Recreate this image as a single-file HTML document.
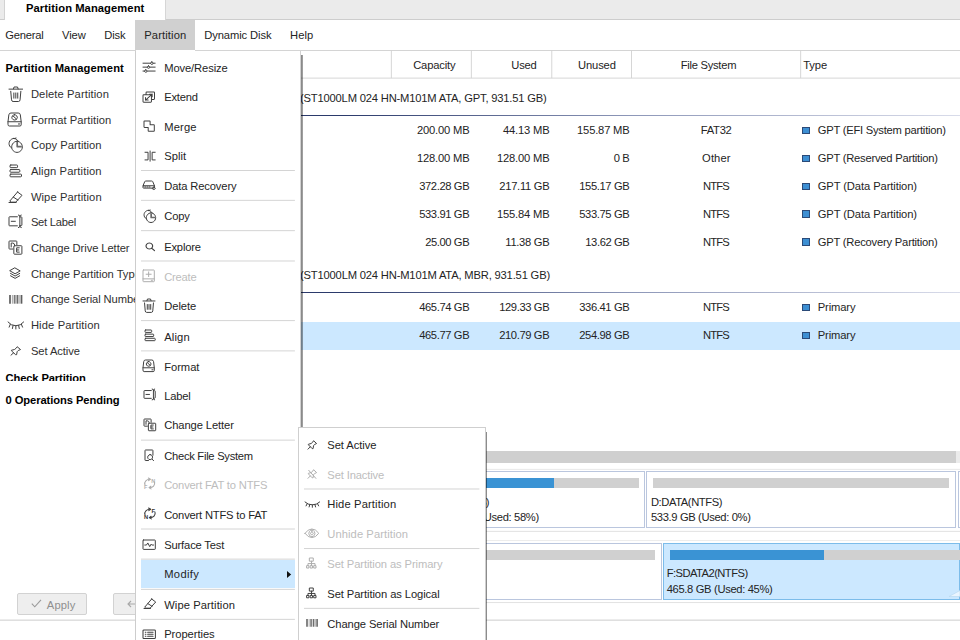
<!DOCTYPE html>
<html lang="en">
<head>
<meta charset="utf-8">
<title>Partition Management</title>
<style>
*{box-sizing:border-box;margin:0;padding:0}
html,body{width:960px;height:640px;overflow:hidden;background:#fff}
body{position:relative;font-family:"Liberation Sans",sans-serif;font-size:11.2px;color:#242424;line-height:14px}
.abs{position:absolute}
.grp{position:absolute;left:0;top:0;width:960px;height:640px}
.t{position:absolute;white-space:nowrap;height:14px;line-height:14px}
.b{font-weight:bold;color:#000}
.dis{color:#bdbdbd}
.lp{color:#303030}
svg{position:absolute;overflow:visible}
.ic{fill:none;stroke:#404040;stroke-width:1;vector-effect:non-scaling-stroke;stroke-linecap:round;stroke-linejoin:round}
.icd{fill:none;stroke:#adadad;stroke-width:1;vector-effect:non-scaling-stroke;stroke-linecap:round;stroke-linejoin:round}
/* ---------- top ---------- */
#tabbar{left:0;top:0;width:960px;height:19.6px;background:#ebebeb;border-bottom:1px solid #cdcdcd}
#tab{left:3.6px;top:0;width:162px;height:20px;background:#fff;border-left:1px solid #d2d2d2;border-right:1px solid #d6d6d6}
#menubar{left:0;top:20px;width:960px;height:31px;background:#fff;border-bottom:1px solid #d4d4d4}
#msel{left:135px;top:20px;width:60px;height:30px;background:#d0d0d0}
/* ---------- table ---------- */
.hl{position:absolute;height:1px}
.sq{position:absolute;width:8px;height:7.6px;background:#3d8fd3;border:1px solid #2b4a78}
.btn{background:#eeeeee;border:1px solid #d2d2d2;border-radius:2px}
.dline{background:linear-gradient(90deg,#2b3a6b 0,#2b3a6b 25%,#8d97b8 60%,#d9dcea 100%)}
.dots{background:#cfcfcf}
.box{background:#fff;border:1px solid #bac6de}
.boxs{background:#cce8ff;border:1px solid #7cbcea}
.bar{background:#d0d0d0}
.barb{background:#3a93d4}
/* ---------- menus ---------- */
.menu{position:absolute;background:#fff}
</style>
</head>
<body>
<!-- top -->
<header class="grp">
<div class="abs" id="tabbar"></div>
<div class="abs" id="tab"></div>
<div class="abs" id="menubar"></div>
<div class="abs" id="msel"></div>
<div class="t b" style="left:26px;top:1px;letter-spacing:0.074px">Partition Management</div>
<div class="t" style="left:5.2px;top:28px;letter-spacing:-0.225px">General</div>
<div class="t" style="left:62px;top:28px;letter-spacing:-0.085px">View</div>
<div class="t" style="left:104.3px;top:28px;letter-spacing:-0.191px">Disk</div>
<div class="t" style="left:144.3px;top:28px;letter-spacing:0.106px">Partition</div>
<div class="t" style="left:204.3px;top:28px;letter-spacing:-0.106px">Dynamic Disk</div>
<div class="t" style="left:290px;top:28px;letter-spacing:0.053px">Help</div>
</header>
<!-- left -->
<aside class="grp" aria-label="Partition Management actions">
<div class="t b" style="left:5.5px;top:61px;letter-spacing:0.074px">Partition Management</div>
<div class="abs" style="left:0;top:51px;width:135px;height:330px;overflow:hidden">
<svg style="left:8.5px;top:35.5px" width="13.6" height="14.5" viewBox="1.00 2.40 14.00 12.20" preserveAspectRatio="none"><path class="ic" d="M1 4.2H15 M5.6 4L6.2 2.4H9.8L10.4 4"/><path class="ic" d="M2.8 6L3.6 13.2Q3.8 14.6 5.2 14.6H10.8Q12.2 14.6 12.4 13.2L13.2 6"/><path class="ic" d="M6 7.4V11.8 M8 7.4V11.8 M10 7.4V11.8"/></svg>
<div class="t lp" style="left:30.9px;top:36px;letter-spacing:0.100px">Delete Partition</div>
<svg style="left:8.0px;top:61.5px" width="13.2" height="13.0" viewBox="1.80 1.80 12.40 12.80" preserveAspectRatio="none"><path class="ic" d="M1.8 10.4L2.6 3.6Q2.8 1.8 4.6 1.8H11.4Q13.2 1.8 13.4 3.6L14.2 10.4V13.4Q14.2 14.6 13 14.6H3Q1.8 14.6 1.8 13.4Z M1.8 10.4H14.2"/><path class="ic" d="M8 3.5A2.6 2.6 0 1 0 8.01 3.5Z M6.4 4.6L9.6 7.6"/><path class="ic" d="M11.6 12.6H12.8"/></svg>
<div class="t lp" style="left:30.9px;top:62px;letter-spacing:0.045px">Format Partition</div>
<svg style="left:8.7px;top:86.9px" width="13.4" height="14.4" viewBox="0.00 -0.40 14.20 14.70" preserveAspectRatio="none"><path class="ic" d="M5.2 0A5.2 5.2 0 1 0 5.21 0Z M6 0.2L7.4 -0.4"/><path class="ic" d="M8.5 2.9A5.7 5.7 0 1 0 8.51 2.9Z" style="fill:var(--icbg,#fff)"/><path class="ic" d="M8.7 3.6V8.4H13.6" style="stroke-width:1.7;stroke-linecap:butt;stroke:#6a6a6a"/></svg>
<div class="t lp" style="left:30.9px;top:87px;letter-spacing:0.030px">Copy Partition</div>
<svg style="left:9.7px;top:113.7px" width="11.5" height="11.8" viewBox="2.00 1.80 12.20 12.40" preserveAspectRatio="none"><path class="ic" d="M2.8 1.8H9.2Q10 1.8 10 2.6V3.8Q10 4.6 9.2 4.6H2.8Q2 4.6 2 3.8V2.6Q2 1.8 2.8 1.8Z"/><path class="ic" d="M2.8 6.6H11.6Q12.4 6.6 12.4 7.4V8.6Q12.4 9.4 11.6 9.4H2.8Q2 9.4 2 8.6V7.4Q2 6.6 2.8 6.6Z"/><path class="ic" d="M2.8 11.4H13.4Q14.2 11.4 14.2 12.2V13.4Q14.2 14.2 13.4 14.2H2.8Q2 14.2 2 13.4V12.2Q2 11.4 2.8 11.4Z"/></svg>
<div class="t lp" style="left:30.9px;top:113px;letter-spacing:0.117px">Align Partition</div>
<svg style="left:8.5px;top:140.5px" width="13.0" height="10.5" viewBox="1.20 1.80 13.40 12.00" preserveAspectRatio="none"><path class="ic" d="M10 1.8L14.6 5.6L8.2 13.4H3.4L2 12.2L10 1.8Z M5.6 7.6L10.4 11 M1.2 13.8H8.6"/></svg>
<div class="t lp" style="left:30.9px;top:139px;letter-spacing:0.085px">Wipe Partition</div>
<svg style="left:9.2px;top:163.9px" width="12.9" height="12.6" viewBox="1.80 1.60 12.60 12.80" preserveAspectRatio="none"><path class="ic" d="M10 3.4H2.4Q1.8 3.4 1.8 4V12Q1.8 12.6 2.4 12.6H10 M4 8H8"/><path class="ic" d="M11 1.6Q12.4 1.6 12.4 3V13Q12.4 14.4 11 14.4 M13.8 1.6Q12.4 1.6 12.4 3 M12.4 13Q12.4 14.4 13.8 14.4 M12.4 3.6H13.8Q14.4 3.6 14.4 4.2V11.8Q14.4 12.4 13.8 12.4H12.4"/></svg>
<div class="t lp" style="left:30.9px;top:164px;letter-spacing:-0.250px">Set Label</div>
<svg style="left:9.2px;top:189.8px" width="12.9" height="13.2" viewBox="1.60 1.60 12.80 12.80" preserveAspectRatio="none"><path class="ic" d="M5.4 9.4H2.2Q1.6 9.4 1.6 8.8V2.2Q1.6 1.6 2.2 1.6H8.8Q9.4 1.6 9.4 2.2V5.2 M3.8 7.4V3.6H5.2Q7 3.6 7.2 5.2"/><path class="ic" d="M7 6.2H13.8Q14.4 6.2 14.4 6.8V13.8Q14.4 14.4 13.8 14.4H7Q6.4 14.4 6.4 13.8V6.8Q6.4 6.2 7 6.2Z"/><path class="ic" d="M11.8 8.2H9.2V12.4H11.8 M9.2 10.3H11.4"/></svg>
<div class="t lp" style="left:30.9px;top:190px;letter-spacing:-0.083px">Change Drive Letter</div>
<svg style="left:10.2px;top:216.5px" width="10.2" height="10.4" viewBox="2.00 1.80 12.00 11.50" preserveAspectRatio="none"><path class="ic" d="M8 1.8L14 5L8 8.2L2 5Z M2.6 7.8L8 10.7L13.4 7.8 M2.6 10.4L8 13.3L13.4 10.4"/></svg>
<div class="t lp" style="left:30.9px;top:216px;letter-spacing:-0.027px">Change Partition Type</div>
<svg style="left:9.7px;top:243.8px" width="11.5" height="8.7" viewBox="2.80 2.50 11.40 11.00" preserveAspectRatio="none"><path d="M2.8 2.5V13.5" fill="none" stroke="#5e5e5e" stroke-width="1.7"/><path d="M5.2 2.5V13.5" fill="none" stroke="#8a8a8a" stroke-width="0.8"/><path d="M7.4 2.5V13.5" fill="none" stroke="#7c7c7c" stroke-width="1.9"/><path d="M10.2 2.5V13.5" fill="none" stroke="#6c6c6c" stroke-width="1.9"/><path d="M12.4 2.5V13.5" fill="none" stroke="#9a9a9a" stroke-width="0.8"/><path d="M14.2 2.5V13.5" fill="none" stroke="#5e5e5e" stroke-width="1.7"/></svg>
<div class="t lp" style="left:30.9px;top:241px;letter-spacing:-0.093px">Change Serial Number</div>
<svg style="left:7.5px;top:270.5px" width="15.7" height="7.0" viewBox="-1.60 5.40 19.20 6.00" preserveAspectRatio="none"><path class="ic" d="M-1.6 5.4Q2 8.6 8 8.6Q14 8.6 17.6 5.4 M1.2 7.4L-0.2 9.8 M4.6 8.4L3.8 11 M8 8.6V11.4 M11.4 8.4L12.2 11 M14.8 7.4L16.2 9.8"/></svg>
<div class="t lp" style="left:30.9px;top:267px;letter-spacing:0.131px">Hide Partition</div>
<svg style="left:10.9px;top:295.6px" width="9.5" height="8.2" viewBox="2.00 2.00 12.00 11.30" preserveAspectRatio="none"><path class="ic" d="M10.2 2L14 5.5L11.1 6.9L9.75 8.5L9.1 12.6H7.85L2.55 7.3V6.5L6.35 5.5L8.25 3.9Z M5.3 10L2 13.3"/></svg>
<div class="t lp" style="left:30.9px;top:293px;letter-spacing:-0.070px">Set Active</div>
<div class="t b" style="left:5.5px;top:320px;letter-spacing:-0.125px">Check Partition</div>
</div>
<div class="t b" style="left:5.5px;top:393px;letter-spacing:-0.083px">0 Operations Pending</div>
<div class="abs btn" style="left:17px;top:593.3px;width:69.7px;height:21.7px"></div>
<svg style="left:31px;top:599px" width="11" height="9" viewBox="0 0 11 9"><path d="M0.8 4.6L3.8 7.8L10 0.8" fill="none" stroke="#9a9a9a" stroke-width="1.1"/></svg>
<div class="t" style="left:46.8px;top:598px;letter-spacing:0.132px;color:#8f8f8f">Apply</div>
<div class="abs btn" style="left:112.5px;top:593.3px;width:69.2px;height:21.7px"></div>
<svg style="left:126.5px;top:599.5px" width="11" height="8" viewBox="0 0 11 8"><path d="M1 4H10.5 M4 1L1 4L4 7" fill="none" stroke="#a8a8a8" stroke-width="1.1"/></svg>
<svg style="left:0;top:0" width="960" height="640" viewBox="0 0 960 640"><rect x="0" y="619.68" width="960" height="0.85" fill="#c4c4c4"/></svg>
</aside>
<!-- table -->
<main class="grp"><section class="grp" aria-label="Partition list">
<svg style="left:0;top:0" width="960" height="640" viewBox="0 0 960 640"><rect x="135" y="77.67" width="825" height="0.85" fill="#cfcfcf"/><rect x="390.88" y="50.6" width="0.85" height="27.5" fill="#cfcfcf"/><rect x="470.88" y="50.6" width="0.85" height="27.5" fill="#cfcfcf"/><rect x="551.38" y="50.6" width="0.85" height="27.5" fill="#cfcfcf"/><rect x="631.08" y="50.6" width="0.85" height="27.5" fill="#cfcfcf"/><rect x="800.28" y="50.6" width="0.85" height="27.5" fill="#cfcfcf"/></svg>
<div class="t" style="left:334.32px;width:200px;text-align:center;top:58px;letter-spacing:-0.163px">Capacity</div>
<div class="t" style="left:423.86px;width:200px;text-align:center;top:58px;letter-spacing:-0.276px">Used</div>
<div class="t" style="left:496.93px;width:200px;text-align:center;top:58px;letter-spacing:-0.136px">Unused</div>
<div class="t" style="left:608.47px;width:200px;text-align:center;top:58px;letter-spacing:-0.268px">File System</div>
<div class="t" style="left:803.2px;top:58px;letter-spacing:-0.107px">Type</div>
<div class="t" style="left:300.0px;top:91px;letter-spacing:-0.184px">(ST1000LM 024 HN-M101M ATA, GPT, 931.51 GB)</div>
<div class="hl dline" style="left:135px;top:115px;width:825px"></div>
<div class="t" style="left:300.0px;top:268px;letter-spacing:-0.178px">(ST1000LM 024 HN-M101M ATA, MBR, 931.51 GB)</div>
<div class="hl dline" style="left:135px;top:292px;width:825px"></div>
<div class="abs" style="left:135px;top:322px;width:825px;height:27.5px;background:#cce8ff"></div>
<div class="t" style="right:490.59px;top:123px;letter-spacing:-0.186px">200.00 MB</div>
<div class="t" style="right:410.59px;top:123px;letter-spacing:-0.191px">44.13 MB</div>
<div class="t" style="right:330.49px;top:123px;letter-spacing:-0.186px">155.87 MB</div>
<div class="t" style="left:616.17px;width:200px;text-align:center;top:123px;letter-spacing:-0.266px">FAT32</div>
<div class="sq" style="left:802.3px;top:126.7px"></div>
<div class="t" style="left:817.7px;top:123px;letter-spacing:-0.232px">GPT (EFI System partition)</div>
<div class="t" style="right:490.59px;top:151px;letter-spacing:-0.186px">128.00 MB</div>
<div class="t" style="right:410.59px;top:151px;letter-spacing:-0.186px">128.00 MB</div>
<div class="t" style="right:330.7px;top:151px;letter-spacing:-0.396px">0 B</div>
<div class="t" style="left:616.35px;width:200px;text-align:center;top:151px;letter-spacing:0.098px">Other</div>
<div class="sq" style="left:802.3px;top:154.7px"></div>
<div class="t" style="left:817.7px;top:151px;letter-spacing:-0.225px">GPT (Reserved Partition)</div>
<div class="t" style="right:490.78px;top:179px;letter-spacing:-0.383px">372.28 GB</div>
<div class="t" style="right:410.69px;top:179px;letter-spacing:-0.291px">217.11 GB</div>
<div class="t" style="right:330.68px;top:179px;letter-spacing:-0.383px">155.17 GB</div>
<div class="t" style="left:615.87px;width:200px;text-align:center;top:179px;letter-spacing:-0.857px">NTFS</div>
<div class="sq" style="left:802.3px;top:182.5px"></div>
<div class="t" style="left:817.7px;top:179px;letter-spacing:-0.092px">GPT (Data Partition)</div>
<div class="t" style="right:490.78px;top:207px;letter-spacing:-0.383px">533.91 GB</div>
<div class="t" style="right:410.59px;top:207px;letter-spacing:-0.186px">155.84 MB</div>
<div class="t" style="right:330.68px;top:207px;letter-spacing:-0.383px">533.75 GB</div>
<div class="t" style="left:615.87px;width:200px;text-align:center;top:207px;letter-spacing:-0.857px">NTFS</div>
<div class="sq" style="left:802.3px;top:210.2px"></div>
<div class="t" style="left:817.7px;top:207px;letter-spacing:-0.092px">GPT (Data Partition)</div>
<div class="t" style="right:490.81px;top:235px;letter-spacing:-0.412px">25.00 GB</div>
<div class="t" style="right:410.71px;top:235px;letter-spacing:-0.307px">11.38 GB</div>
<div class="t" style="right:330.71px;top:235px;letter-spacing:-0.412px">13.62 GB</div>
<div class="t" style="left:615.87px;width:200px;text-align:center;top:235px;letter-spacing:-0.857px">NTFS</div>
<div class="sq" style="left:802.3px;top:238.0px"></div>
<div class="t" style="left:817.7px;top:235px;letter-spacing:-0.201px">GPT (Recovery Partition)</div>
<div class="t" style="right:490.78px;top:300px;letter-spacing:-0.383px">465.74 GB</div>
<div class="t" style="right:410.78px;top:300px;letter-spacing:-0.383px">129.33 GB</div>
<div class="t" style="right:330.68px;top:300px;letter-spacing:-0.383px">336.41 GB</div>
<div class="t" style="left:615.87px;width:200px;text-align:center;top:300px;letter-spacing:-0.857px">NTFS</div>
<div class="sq" style="left:802.3px;top:303.9px"></div>
<div class="t" style="left:817.7px;top:300px;letter-spacing:-0.119px">Primary</div>
<div class="t" style="right:490.78px;top:328px;letter-spacing:-0.383px">465.77 GB</div>
<div class="t" style="right:410.78px;top:328px;letter-spacing:-0.383px">210.79 GB</div>
<div class="t" style="right:330.68px;top:328px;letter-spacing:-0.383px">254.98 GB</div>
<div class="t" style="left:615.87px;width:200px;text-align:center;top:328px;letter-spacing:-0.857px">NTFS</div>
<div class="sq" style="left:802.3px;top:331.7px"></div>
<div class="t" style="left:817.7px;top:328px;letter-spacing:-0.119px">Primary</div>
</section>
<!-- diskmap -->
<section class="grp" aria-label="Disk map">
<div class="abs dots" style="left:300px;top:450.8px;width:656px;height:12.3px"></div>
<div class="abs" style="left:956px;top:450.8px;width:4px;height:12.3px;background:#ebebeb"></div>
<svg style="left:0;top:0" width="960" height="640" viewBox="0 0 960 640"><rect x="300" y="468.88" width="660" height="0.85" fill="#e4e4e4"/><rect x="300" y="530.88" width="660" height="0.85" fill="#dcdcdc"/><rect x="300" y="540.18" width="660" height="0.85" fill="#e9e9e9"/><rect x="300" y="602.18" width="660" height="0.85" fill="#dedede"/></svg>
<div class="abs box" style="left:300px;top:471.2px;width:345.2px;height:56.8px"></div>
<div class="abs bar" style="left:310px;top:478.2px;width:328.8px;height:10.1px"></div>
<div class="abs barb" style="left:310px;top:478.2px;width:244px;height:10.1px"></div>
<div class="t" style="right:471.13px;top:495px;letter-spacing:-0.732px">C:(NTFS)</div>
<div class="t" style="right:421.14px;top:510px;letter-spacing:-0.340px">372.3 GB (Used: 58%)</div>
<div class="abs box" style="left:646.4px;top:471.2px;width:309.6px;height:56.8px"></div>
<div class="abs bar" style="left:652.8px;top:478.2px;width:296.4px;height:10.1px"></div>
<div class="t" style="left:650.9px;top:495px;letter-spacing:-0.399px">D:DATA(NTFS)</div>
<div class="t" style="left:650.9px;top:510px;letter-spacing:-0.350px">533.9 GB (Used: 0%)</div>
<div class="abs box" style="left:957.8px;top:471.2px;width:10px;height:56.8px"></div>
<div class="abs box" style="left:300px;top:543.2px;width:361.6px;height:56.4px"></div>
<div class="abs bar" style="left:310px;top:549.9px;width:345px;height:10px"></div>
<div class="abs boxs" style="left:662.8px;top:543.2px;width:297px;height:56.4px"></div>
<div class="abs bar" style="left:669.8px;top:549.9px;width:295px;height:10px"></div>
<div class="abs barb" style="left:669.8px;top:549.9px;width:154px;height:10px"></div>
<div class="t" style="left:666.7px;top:566px;letter-spacing:-0.542px">F:SDATA2(NTFS)</div>
<div class="t" style="left:666.7px;top:582px;letter-spacing:-0.340px">465.8 GB (Used: 45%)</div>
<svg style="left:949px;top:590px" width="11" height="7" viewBox="0 0 11 7"><path d="M0 6.5L11 0.5V6.5Z" fill="#eaf5ff" stroke="#b7d6ee" stroke-width="0.6"/></svg>
</section></main>
<!-- menu1 -->
<div class="grp" role="menu" aria-label="Partition">
<div class="abs" style="left:300.3px;top:54.7px;width:2.5px;height:373px;background:linear-gradient(90deg,rgba(0,0,0,.46) 0,rgba(0,0,0,.46) 70%,rgba(0,0,0,.28) 100%)"></div>
<div class="menu" style="left:135.2px;top:50.8px;width:165.6px;height:590px;border-left:1px solid #cdcdcd;border-right:1px solid #d2d2d2"></div>
<div class="abs" style="left:136px;top:50px;width:59px;height:1px;background:#fff"></div>
<svg style="left:0;top:0" width="960" height="640" viewBox="0 0 960 640"><rect x="141" y="170.07" width="153.9" height="0.85" fill="#cdcdcd"/><rect x="141" y="199.87" width="153.9" height="0.85" fill="#cdcdcd"/><rect x="141" y="230.27" width="153.9" height="0.85" fill="#cdcdcd"/><rect x="141" y="260.57" width="153.9" height="0.85" fill="#cdcdcd"/><rect x="141" y="320.23" width="153.9" height="0.85" fill="#cdcdcd"/><rect x="141" y="350.48" width="153.9" height="0.85" fill="#cdcdcd"/><rect x="141" y="439.68" width="153.9" height="0.85" fill="#cdcdcd"/><rect x="141" y="528.58" width="153.9" height="0.85" fill="#cdcdcd"/><rect x="141" y="558.68" width="153.9" height="0.85" fill="#cdcdcd"/><rect x="141" y="588.88" width="153.9" height="0.85" fill="#cdcdcd"/><rect x="141" y="618.88" width="153.9" height="0.85" fill="#cdcdcd"/></svg>
<div class="abs" style="left:141px;top:560.2px;width:154px;height:28px;background:#cce8ff"></div>
<svg style="left:287px;top:570.6px" width="4.2" height="7" viewBox="0 0 4.2 7"><path d="M0 0L4.2 3.5L0 7Z" fill="#111"/></svg>
<svg style="left:143.25px;top:61.75px" width="12.15" height="10.25" viewBox="1.40 2.00 13.20 12.00" preserveAspectRatio="none"><path class="ic" d="M1.4 3.4H9.6 M12.4 3.4H14.6 M1.4 8H6 M8.8 8H14.6 M1.4 12.6H3 M5.8 12.6H14.6"/><path class="ic" d="M11 2A1.4 1.4 0 1 0 11.01 2Z M7.4 6.6A1.4 1.4 0 1 0 7.41 6.6Z M4.4 11.2A1.4 1.4 0 1 0 4.41 11.2Z"/></svg>
<div class="t" style="left:164.2px;top:61px;letter-spacing:-0.108px">Move/Resize</div>
<svg style="left:142.9px;top:91.75px" width="11.5" height="10.25" viewBox="1.60 2.00 12.80 12.40" preserveAspectRatio="none"><path class="ic" d="M5 5V2.8Q5 2 5.8 2H13.6Q14.4 2 14.4 2.8V10.2Q14.4 11 13.6 11H11.4"/><path class="ic" d="M2.4 5.4H10.2Q11 5.4 11 6.2V13.6Q11 14.4 10.2 14.4H2.4Q1.6 14.4 1.6 13.6V6.2Q1.6 5.4 2.4 5.4Z"/><path class="ic" d="M4.4 11.8L11.8 4.6 M8.8 4.6H11.8V7.6 M7.4 11.8H4.4V8.8"/></svg>
<div class="t" style="left:164.2px;top:90px;letter-spacing:-0.216px">Extend</div>
<svg style="left:144.1px;top:120.9px" width="10.3" height="10.2" viewBox="2.00 2.20 11.80 11.80" preserveAspectRatio="none"><path class="ic" d="M2.6 2.2H8.4Q9 2.2 9 2.8V6.6H13.2Q13.8 6.6 13.8 7.2V13.4Q13.8 14 13.2 14H7.4Q6.8 14 6.8 13.4V9.6H2.6Q2 9.6 2 9V2.8Q2 2.2 2.6 2.2Z"/></svg>
<div class="t" style="left:164.2px;top:120px;letter-spacing:0.141px">Merge</div>
<svg style="left:144.5px;top:150.7px" width="10.2" height="10.2" viewBox="2.00 1.60 12.00 12.80" preserveAspectRatio="none"><path class="ic" d="M8 1.6V14.4 M2 3.2H5.6V12.8H2 M14 3.2H10.4V12.8H14"/></svg>
<div class="t" style="left:164.2px;top:149px;letter-spacing:0.020px">Split</div>
<svg style="left:142.9px;top:180.8px" width="12.3" height="8.5" viewBox="1.60 2.60 13.70 12.20" preserveAspectRatio="none"><path class="ic" d="M1.6 9.4L3.6 3.4Q3.9 2.6 4.8 2.6H11.2Q12.1 2.6 12.4 3.4L14.4 9.4"/><path class="ic" d="M2.2 9.4H13.8Q14.4 9.4 14.4 10V12.2Q14.4 12.8 13.8 12.8H2.2Q1.6 12.8 1.6 12.2V10Q1.6 9.4 2.2 9.4Z M3.6 11.1H4.6 M6 11.1H7 M8.4 11.1H9.4"/><path class="ic" d="M13.6 11.4A1.7 1.7 0 1 0 13.61 11.4Z"/></svg>
<div class="t" style="left:164.2px;top:179px;letter-spacing:-0.131px">Data Recovery</div>
<svg style="left:143.5px;top:209.6px" width="11.7" height="12.5" viewBox="0.00 -0.40 14.20 14.70" preserveAspectRatio="none"><path class="ic" d="M5.2 0A5.2 5.2 0 1 0 5.21 0Z M6 0.2L7.4 -0.4"/><path class="ic" d="M8.5 2.9A5.7 5.7 0 1 0 8.51 2.9Z" style="fill:var(--icbg,#fff)"/><path class="ic" d="M8.7 3.6V8.4H13.6" style="stroke-width:1.7;stroke-linecap:butt;stroke:#6a6a6a"/></svg>
<div class="t" style="left:164.2px;top:209px;letter-spacing:-0.126px">Copy</div>
<svg style="left:145.7px;top:243.2px" width="8.5" height="7.7" viewBox="2.60 2.60 11.20 11.20" preserveAspectRatio="none"><path class="ic" d="M7 2.6A4.4 4.4 0 1 0 7.01 2.6Z M10.2 10.2L13.8 13.8" style="stroke-width:1.15"/></svg>
<div class="t" style="left:164.2px;top:240px;letter-spacing:-0.189px">Explore</div>
<svg style="left:142.9px;top:269.5px" width="11.3" height="11.7" viewBox="2.40 1.80 11.20 12.40" preserveAspectRatio="none"><path class="icd" d="M3 1.8H13Q13.6 1.8 13.6 2.4V13.6Q13.6 14.2 13 14.2H3Q2.4 14.2 2.4 13.6V2.4Q2.4 1.8 3 1.8Z M2.4 11.2H13.6 M8 3.8V8.8 M5.5 6.3H10.5 M10.6 12.7H11.8"/></svg>
<div class="t dis" style="left:164.2px;top:270px;letter-spacing:-0.230px">Create</div>
<svg style="left:143.2px;top:298.7px" width="12.0" height="13.4" viewBox="1.00 2.40 14.00 12.20" preserveAspectRatio="none"><path class="ic" d="M1 4.2H15 M5.6 4L6.2 2.4H9.8L10.4 4"/><path class="ic" d="M2.8 6L3.6 13.2Q3.8 14.6 5.2 14.6H10.8Q12.2 14.6 12.4 13.2L13.2 6"/><path class="ic" d="M6 7.4V11.8 M8 7.4V11.8 M10 7.4V11.8"/></svg>
<div class="t" style="left:164.2px;top:299px;letter-spacing:-0.040px">Delete</div>
<svg style="left:144.5px;top:330.2px" width="10.2" height="10.7" viewBox="2.00 1.80 12.20 12.40" preserveAspectRatio="none"><path class="ic" d="M2.8 1.8H9.2Q10 1.8 10 2.6V3.8Q10 4.6 9.2 4.6H2.8Q2 4.6 2 3.8V2.6Q2 1.8 2.8 1.8Z"/><path class="ic" d="M2.8 6.6H11.6Q12.4 6.6 12.4 7.4V8.6Q12.4 9.4 11.6 9.4H2.8Q2 9.4 2 8.6V7.4Q2 6.6 2.8 6.6Z"/><path class="ic" d="M2.8 11.4H13.4Q14.2 11.4 14.2 12.2V13.4Q14.2 14.2 13.4 14.2H2.8Q2 14.2 2 13.4V12.2Q2 11.4 2.8 11.4Z"/></svg>
<div class="t" style="left:164.2px;top:330px;letter-spacing:0.161px">Align</div>
<svg style="left:142.9px;top:359.6px" width="11.3" height="11.6" viewBox="1.80 1.80 12.40 12.80" preserveAspectRatio="none"><path class="ic" d="M1.8 10.4L2.6 3.6Q2.8 1.8 4.6 1.8H11.4Q13.2 1.8 13.4 3.6L14.2 10.4V13.4Q14.2 14.6 13 14.6H3Q1.8 14.6 1.8 13.4Z M1.8 10.4H14.2"/><path class="ic" d="M8 3.5A2.6 2.6 0 1 0 8.01 3.5Z M6.4 4.6L9.6 7.6"/><path class="ic" d="M11.6 12.6H12.8"/></svg>
<div class="t" style="left:164.2px;top:360px;letter-spacing:-0.033px">Format</div>
<svg style="left:144.0px;top:388.7px" width="11.2" height="10.9" viewBox="1.80 1.60 12.60 12.80" preserveAspectRatio="none"><path class="ic" d="M10 3.4H2.4Q1.8 3.4 1.8 4V12Q1.8 12.6 2.4 12.6H10 M4 8H8"/><path class="ic" d="M11 1.6Q12.4 1.6 12.4 3V13Q12.4 14.4 11 14.4 M13.8 1.6Q12.4 1.6 12.4 3 M12.4 13Q12.4 14.4 13.8 14.4 M12.4 3.6H13.8Q14.4 3.6 14.4 4.2V11.8Q14.4 12.4 13.8 12.4H12.4"/></svg>
<div class="t" style="left:164.2px;top:389px;letter-spacing:-0.222px">Label</div>
<svg style="left:143.5px;top:418.5px" width="11.7" height="11.75" viewBox="1.60 1.60 12.80 12.80" preserveAspectRatio="none"><path class="ic" d="M5.4 9.4H2.2Q1.6 9.4 1.6 8.8V2.2Q1.6 1.6 2.2 1.6H8.8Q9.4 1.6 9.4 2.2V5.2 M3.8 7.4V3.6H5.2Q7 3.6 7.2 5.2"/><path class="ic" d="M7 6.2H13.8Q14.4 6.2 14.4 6.8V13.8Q14.4 14.4 13.8 14.4H7Q6.4 14.4 6.4 13.8V6.8Q6.4 6.2 7 6.2Z"/><path class="ic" d="M11.8 8.2H9.2V12.4H11.8 M9.2 10.3H11.4"/></svg>
<div class="t" style="left:164.2px;top:418px;letter-spacing:-0.097px">Change Letter</div>
<svg style="left:144.9px;top:449.6px" width="8.6" height="10.7" viewBox="3.20 1.80 10.40 12.60" preserveAspectRatio="none"><path class="ic" d="M12.8 8V2.4Q12.8 1.8 12.2 1.8H3.8Q3.2 1.8 3.2 2.4V13.6Q3.2 14.2 3.8 14.2H7.4"/><path class="ic" d="M9.4 7.2A3 3 0 1 0 9.41 7.2Z M11.6 12.4L13.6 14.4"/></svg>
<div class="t" style="left:164.2px;top:449px;letter-spacing:-0.274px">Check File System</div>
<svg style="left:144.0px;top:478.4px" width="10.7" height="11.5" viewBox="2.00 1.40 11.23 14.00" preserveAspectRatio="none"><path class="icd" d="M3 9.6A5.2 5.2 0 0 1 8.4 2.9 M13 6.4A5.2 5.2 0 0 1 7.6 13.1" style="stroke-width:1.1"/><path class="icd" d="M6.6 1.4L8.6 2.9L6.8 4.6 M9.4 14.6L7.4 13.1L9.2 11.4" style="stroke-width:1.1"/><text x="9.6" y="7" font-family="Liberation Sans,sans-serif" font-weight="bold" font-size="5.8" fill="#b0b0b0">N</text><text x="2" y="14.2" font-family="Liberation Sans,sans-serif" font-weight="bold" font-size="5.8" fill="#b0b0b0">F</text></svg>
<div class="t dis" style="left:164.2px;top:478px;letter-spacing:-0.182px">Convert FAT to NTFS</div>
<svg style="left:143.5px;top:507.9px" width="11.2" height="11.5" viewBox="2.00 1.40 11.23 14.00" preserveAspectRatio="none"><path class="ic" d="M3 9.6A5.2 5.2 0 0 1 8.4 2.9 M13 6.4A5.2 5.2 0 0 1 7.6 13.1" style="stroke-width:1.1"/><path class="ic" d="M6.6 1.4L8.6 2.9L6.8 4.6 M9.4 14.6L7.4 13.1L9.2 11.4" style="stroke-width:1.1"/><text x="9.6" y="7" font-family="Liberation Sans,sans-serif" font-weight="bold" font-size="5.8" fill="#333">F</text><text x="2" y="14.2" font-family="Liberation Sans,sans-serif" font-weight="bold" font-size="5.8" fill="#333">N</text></svg>
<div class="t" style="left:164.2px;top:508px;letter-spacing:-0.193px">Convert NTFS to FAT</div>
<svg style="left:142.9px;top:539.6px" width="12.3" height="9.4" viewBox="1.60 2.60 12.80 10.80" preserveAspectRatio="none"><path class="ic" d="M2.2 2.6H13.8Q14.4 2.6 14.4 3.2V12.8Q14.4 13.4 13.8 13.4H2.2Q1.6 13.4 1.6 12.8V3.2Q1.6 2.6 2.2 2.6Z M3.4 8.4H5.2L6.6 6L8.6 10.2L10 7.4L10.8 8.4H12.6"/></svg>
<div class="t" style="left:164.2px;top:538px;letter-spacing:-0.160px">Surface Test</div>
<div class="t" style="left:164.2px;top:567px;letter-spacing:0.342px">Modify</div>
<svg style="left:143.5px;top:599.2px" width="11.7" height="9.5" viewBox="1.20 1.80 13.40 12.00" preserveAspectRatio="none"><path class="ic" d="M10 1.8L14.6 5.6L8.2 13.4H3.4L2 12.2L10 1.8Z M5.6 7.6L10.4 11 M1.2 13.8H8.6"/></svg>
<div class="t" style="left:164.2px;top:598px;letter-spacing:0.085px">Wipe Partition</div>
<svg style="left:142.8px;top:630.2px" width="12.4" height="8.5" viewBox="1.60 2.60 12.80 10.80" preserveAspectRatio="none"><path class="ic" d="M2.6 2.6H13.4Q14.4 2.6 14.4 3.6V12.4Q14.4 13.4 13.4 13.4H2.6Q1.6 13.4 1.6 12.4V3.6Q1.6 2.6 2.6 2.6Z M6.4 5.4H12 M6.4 8H12 M6.4 10.6H12 M4 5.4H4.6 M4 8H4.6 M4 10.6H4.6" style="stroke-width:1.05"/></svg>
<div class="t" style="left:164.2px;top:627px;letter-spacing:-0.054px">Properties</div>
</div>
<!-- menu2 -->
<div class="grp" role="menu" aria-label="Modify">
<div class="abs" style="left:485.3px;top:432.2px;width:2px;height:209px;background:rgba(0,0,0,.45)"></div>
<div class="menu" style="left:298px;top:427.2px;width:188px;height:214px;border:1px solid #cfcfcf;border-bottom:0"></div>
<svg style="left:0;top:0" width="960" height="640" viewBox="0 0 960 640"><rect x="304" y="488.57" width="175.4" height="0.85" fill="#cdcdcd"/><rect x="304" y="548.18" width="175.4" height="0.85" fill="#cdcdcd"/><rect x="304" y="607.88" width="175.4" height="0.85" fill="#cdcdcd"/></svg>
<svg style="left:308.4px;top:440.75px" width="8.6" height="8.15" viewBox="2.00 2.00 12.00 11.30" preserveAspectRatio="none"><path class="ic" d="M10.2 2L14 5.5L11.1 6.9L9.75 8.5L9.1 12.6H7.85L2.55 7.3V6.5L6.35 5.5L8.25 3.9Z M5.3 10L2 13.3"/></svg>
<div class="t" style="left:327.3px;top:438px;letter-spacing:-0.070px">Set Active</div>
<svg style="left:308.4px;top:470.3px" width="8.6" height="8.4" viewBox="2.00 2.00 12.00 11.40" preserveAspectRatio="none"><path class="icd" d="M10.2 2L14 5.5L11.1 6.9L9.75 8.5L9.1 12.6H7.85L2.55 7.3V6.5L6.35 5.5L8.25 3.9Z M5.3 10L2 13.3"/><path class="icd" d="M3 2.4L13 13.4"/></svg>
<div class="t dis" style="left:327.3px;top:468px;letter-spacing:-0.133px">Set Inactive</div>
<svg style="left:304.8px;top:501.5px" width="14.7" height="5.3" viewBox="-1.60 5.40 19.20 6.00" preserveAspectRatio="none"><path class="ic" d="M-1.6 5.4Q2 8.6 8 8.6Q14 8.6 17.6 5.4 M1.2 7.4L-0.2 9.8 M4.6 8.4L3.8 11 M8 8.6V11.4 M11.4 8.4L12.2 11 M14.8 7.4L16.2 9.8"/></svg>
<div class="t" style="left:327.3px;top:497px;letter-spacing:0.131px">Hide Partition</div>
<svg style="left:305.25px;top:529.1px" width="13.75" height="8.6" viewBox="-1.00 2.80 18.00 10.40" preserveAspectRatio="none"><path class="icd" d="M-1 8Q3 2.8 8 2.8Q13 2.8 17 8Q13 13.2 8 13.2Q3 13.2 -1 8Z M8 4A4 4 0 1 0 8.01 4Z M8 6.2A1.8 1.8 0 1 0 8.01 6.2Z"/></svg>
<div class="t dis" style="left:327.3px;top:527px;letter-spacing:0.073px">Unhide Partition</div>
<svg style="left:307.3px;top:558.2px" width="9.0" height="10.05" viewBox="1.40 1.60 13.20 12.60" preserveAspectRatio="none"><path class="icd" d="M5.4 1.6H10.6V5.6H5.4Z M8 5.6V8.6 M2.8 11V8.6H13.2V11 M8 8.6V11"/><path class="icd" d="M1.4 11.2H4.2V14.2H1.4Z M6.6 11.2H9.4V14.2H6.6Z M11.8 11.2H14.6V14.2H11.8Z"/></svg>
<div class="t dis" style="left:327.3px;top:557px;letter-spacing:-0.098px">Set Partition as Primary</div>
<svg style="left:307.3px;top:588.0px" width="9.0" height="9.8" viewBox="1.40 1.60 13.20 12.60" preserveAspectRatio="none"><path class="ic" d="M5.4 1.6H10.6V5.6H5.4Z M8 5.6V8.6 M2.8 11V8.6H13.2V11 M8 8.6V11"/><path class="ic" d="M1.4 11.2H4.2V14.2H1.4Z M6.6 11.2H9.4V14.2H6.6Z M11.8 11.2H14.6V14.2H11.8Z"/></svg>
<div class="t" style="left:327.3px;top:587px;letter-spacing:-0.087px">Set Partition as Logical</div>
<svg style="left:307.3px;top:619.25px" width="10.1" height="7.75" viewBox="2.80 2.50 11.40 11.00" preserveAspectRatio="none"><path d="M2.8 2.5V13.5" fill="none" stroke="#5e5e5e" stroke-width="1.7"/><path d="M5.2 2.5V13.5" fill="none" stroke="#8a8a8a" stroke-width="0.8"/><path d="M7.4 2.5V13.5" fill="none" stroke="#7c7c7c" stroke-width="1.9"/><path d="M10.2 2.5V13.5" fill="none" stroke="#6c6c6c" stroke-width="1.9"/><path d="M12.4 2.5V13.5" fill="none" stroke="#9a9a9a" stroke-width="0.8"/><path d="M14.2 2.5V13.5" fill="none" stroke="#5e5e5e" stroke-width="1.7"/></svg>
<div class="t" style="left:327.3px;top:617px;letter-spacing:-0.093px">Change Serial Number</div>
</div>
</body>
</html>
